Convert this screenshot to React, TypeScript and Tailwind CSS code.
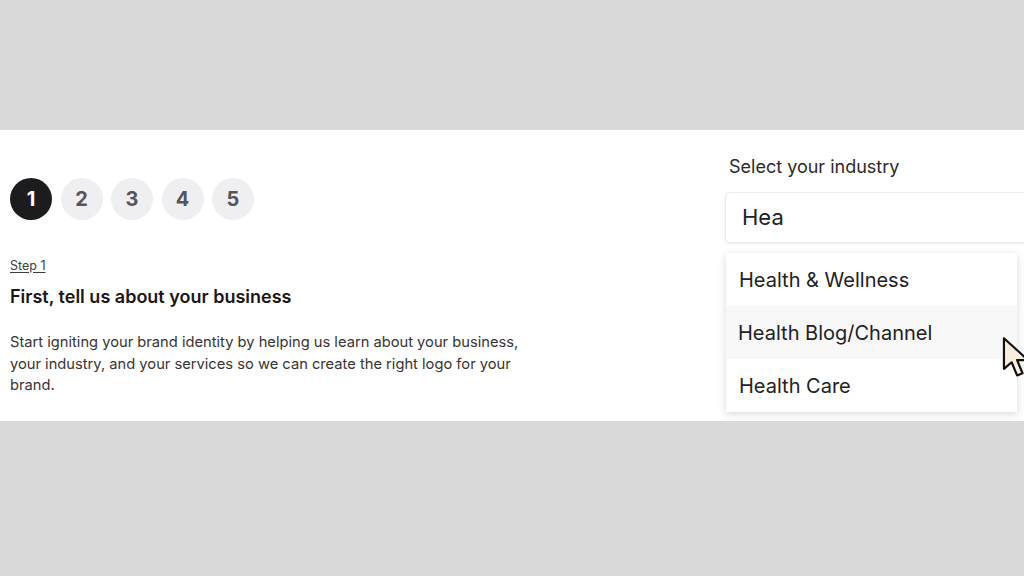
import React from 'react';

const steps = [1, 2, 3, 4, 5];
const options = ['Health & Wellness', 'Health Blog/Channel', 'Health Care'];

function Cursor() {
    return (
        <svg width="30" height="46" viewBox="0 0 26 42" className="absolute left-[1001px] top-[336px]">
            <path
                d="M2 2 L2 30 L9 24 L14 36 L19 34 L14 22 L24 22 Z"
                fill="#fbeedf"
                stroke="#111"
                strokeWidth="2"
                strokeLinejoin="round"
            />
        </svg>
    );
}

export default function App() {
    return (
        <div className="relative w-[1024px] h-[576px] overflow-hidden bg-[#d9d9d9] font-['Inter',sans-serif]">
            <div className="h-[130px]" />
            <section className="h-[291px] bg-white flex">
                <div className="w-[715px] shrink-0 pl-[10px] pt-[48px]">
                    <div className="flex gap-[8.5px]">
                        {steps.map((n) => (
                            <div
                                key={n}
                                className={
                                    n === 1
                                        ? 'w-[42px] h-[42px] rounded-full bg-[#1c1c1e] text-white flex items-center justify-center text-[20px] font-bold'
                                        : 'w-[42px] h-[42px] rounded-full bg-[#efeff1] text-[#55555d] flex items-center justify-center text-[20px] font-bold'
                                }
                            >
                                {n}
                            </div>
                        ))}
                    </div>
                    <p className="mt-[37px] text-[12.5px] leading-[18px] text-[#3d3d3d] underline underline-offset-2">Step 1</p>
                    <h2 className="mt-[10px] text-[18px] leading-[24px] font-semibold text-[#1c1717]">
                        First, tell us about your business
                    </h2>
                    <p className="mt-[23px] w-[530px] text-[14.7px] leading-[21.5px] text-[#3a3434]">
                        Start igniting your brand identity by helping us learn about your business,
                        your industry, and your services so we can create the right logo for your
                        brand.
                    </p>
                </div>
                <div className="flex-1 min-w-0 pt-[25px] pl-[10px]">
                    <p className="pl-[4px] text-[18px] leading-[24px] text-[#2e2a2a]">Select your industry</p>
                    <div className="mt-[13px] h-[51px] w-[320px] rounded-[5px] border border-[#ececec] shadow-[0_1px_3px_rgba(0,0,0,0.08)] flex items-center pl-[16px] text-[22px] text-[#222]">
                        Hea
                    </div>
                    <div className="mt-[10px] ml-[1px] w-[291px] bg-white shadow-[0_2px_8px_rgba(0,0,0,0.15)]">
                        {options.map((o, i) => (
                            <div
                                key={o}
                                className={
                                    i === 1
                                        ? 'h-[53px] flex items-center pl-[12px] text-[20px] text-[#222] bg-[#f8f8f8]'
                                        : 'h-[53px] flex items-center pl-[13px] text-[20px] text-[#222]'
                                }
                            >
                                {o}
                            </div>
                        ))}
                    </div>
                </div>
            </section>
            <Cursor />
        </div>
    );
}
